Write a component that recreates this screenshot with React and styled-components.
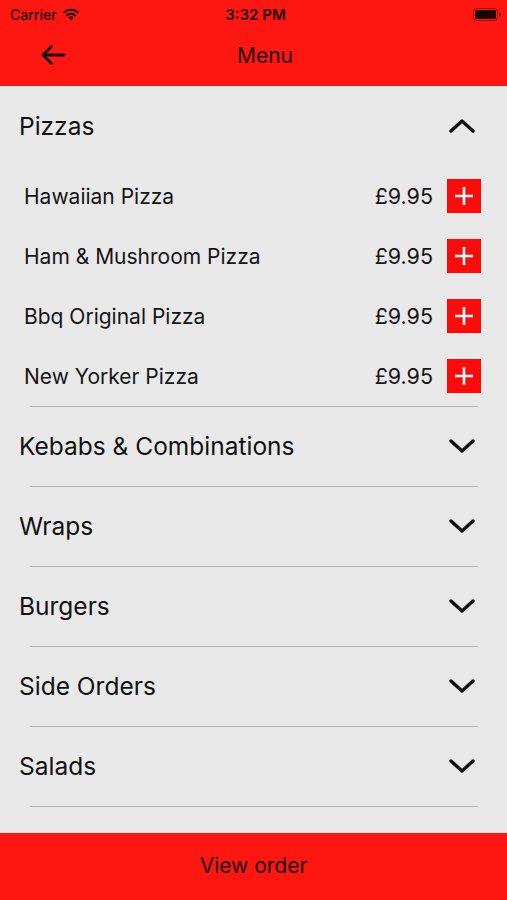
import React, { useState } from "react";
import styled, { createGlobalStyle } from "styled-components";

const GlobalStyle = createGlobalStyle`
  html, body { margin: 0; padding: 0; }
  body {
    font-family: Inter, "Liberation Sans", Arial, sans-serif;
    background: #e9e9e9;
  }
`;

const RED = "#fe1610";

const Screen = styled.div`
  width: 507px;
  height: 900px;
  display: flex;
  flex-direction: column;
  background: #e9e9e9;
  overflow: hidden;
`;

const Header = styled.header`
  background: ${RED};
  height: 86px;
  display: flex;
  flex-direction: column;
`;

const StatusBar = styled.div`
  height: 28px;
  display: grid;
  grid-template-columns: 1fr auto 1fr;
  align-items: center;
  padding: 0 6px 0 10px;
  color: #1a0505;
`;

const Carrier = styled.div`
  display: flex;
  align-items: center;
  gap: 5px;
  font-size: 14px;
  font-weight: 500;
`;

const Clock = styled.div`
  font-size: 15px;
  font-weight: 600;
`;

const Battery = styled.div`
  justify-self: end;
  display: flex;
  align-items: center;
`;

const NavBar = styled.div`
  flex: 1;
  display: flex;
  align-items: center;
  padding: 0 0 4px 40px;
  color: #1a0505;
`;

const BackButton = styled.button`
  border: 0;
  background: none;
  padding: 0;
  width: 30px;
  height: 30px;
  display: flex;
  align-items: center;
  cursor: pointer;
`;

const Title = styled.h1`
  margin: 0 0 0 167px;
  font-size: 21px;
  font-weight: 400;
`;

const Content = styled.main`
  flex: 1;
  overflow: hidden;
`;

const Section = styled.section``;

const SectionHead = styled.div`
  height: 80px;
  display: flex;
  align-items: center;
  justify-content: space-between;
  padding: 0 32px 0 19px;
  cursor: pointer;
`;

const SectionTitle = styled.span`
  font-size: 24.5px;
  color: #111;
`;

const ItemRow = styled.div`
  height: 60px;
  display: flex;
  align-items: center;
  padding: 0 26px 0 24px;
`;

const ItemName = styled.span`
  flex: 1;
  font-size: 21px;
  color: #151515;
`;

const Price = styled.span`
  font-size: 21.5px;
  color: #151515;
  margin-right: 14px;
`;

const AddButton = styled.button`
  width: 34px;
  height: 34px;
  border: 0;
  padding: 0;
  background: #fe0a0a;
  display: flex;
  align-items: center;
  justify-content: center;
`;

const Divider = styled.hr`
  margin: 0 29px -1px 30px;
  border: 0;
  border-top: 1px solid #b3b3b3;
  position: relative;
`;

const Footer = styled.button`
  height: 67px;
  border: 0;
  background: ${RED};
  font-family: inherit;
  font-size: 21px;
  color: #1a0505;
  padding: 0 0 2px;
`;

const Chevron = ({ up }) => (
  <svg width="26" height="16" viewBox="0 0 26 16">
    <path
      d={up ? "M2 13 L13 3 L24 13" : "M2 3 L13 13 L24 3"}
      fill="none"
      stroke="#111"
      strokeWidth="3.4"
      strokeLinecap="round"
      strokeLinejoin="round"
    />
  </svg>
);

const Plus = () => (
  <svg width="20" height="20" viewBox="0 0 20 20">
    <path d="M10 1 V19 M1 10 H19" stroke="#fff" strokeWidth="2.6" />
  </svg>
);

const sections = [
  {
    name: "Pizzas",
    items: [
      ["Hawaiian Pizza", "£9.95"],
      ["Ham & Mushroom Pizza", "£9.95"],
      ["Bbq Original Pizza", "£9.95"],
      ["New Yorker Pizza", "£9.95"],
    ],
  },
  { name: "Kebabs & Combinations", items: [] },
  { name: "Wraps", items: [] },
  { name: "Burgers", items: [] },
  { name: "Side Orders", items: [] },
  { name: "Salads", items: [] },
];

export default function App() {
  const [open, setOpen] = useState("Pizzas");

  return (
    <Screen>
      <GlobalStyle />
      <Header>
        <StatusBar>
          <Carrier>
            Carrier
            <svg width="18" height="13" viewBox="0 0 18 13">
              <path d="M9 12.5 L6.3 9.6 A3.8 3.8 0 0 1 11.7 9.6 Z" fill="#1a0505" />
              <path d="M4.4 7.7 A6.5 6.5 0 0 1 13.6 7.7" fill="none" stroke="#1a0505" strokeWidth="2" />
              <path d="M1.6 4.9 A10.5 10.5 0 0 1 16.4 4.9" fill="none" stroke="#1a0505" strokeWidth="2" />
            </svg>
          </Carrier>
          <Clock>3:32 PM</Clock>
          <Battery>
            <svg width="28" height="13" viewBox="0 0 28 13">
              <rect x="0.5" y="0.5" width="24" height="12" rx="3" fill="none" stroke="#1a0505" strokeOpacity="0.4" />
              <rect x="2" y="2" width="21" height="9" rx="1.8" fill="#1a0505" />
              <path d="M26 4.5 V8.5 A2 2 0 0 0 26 4.5 Z" fill="#1a0505" fillOpacity="0.4" />
            </svg>
          </Battery>
        </StatusBar>
        <NavBar>
          <BackButton aria-label="Back">
            <svg width="26" height="22" viewBox="0 0 26 22">
              <path
                d="M24 11 H3 M11.5 2.5 L3 11 L11.5 19.5"
                fill="none"
                stroke="#111"
                strokeWidth="2.8"
                strokeLinecap="round"
                strokeLinejoin="round"
              />
            </svg>
          </BackButton>
          <Title>Menu</Title>
        </NavBar>
      </Header>

      <Content>
        {sections.map((s) => {
          const isOpen = open === s.name;
          return (
            <Section key={s.name}>
              <SectionHead onClick={() => setOpen(isOpen ? null : s.name)}>
                <SectionTitle>{s.name}</SectionTitle>
                <Chevron up={isOpen} />
              </SectionHead>
              {isOpen &&
                s.items.map(([name, price]) => (
                  <ItemRow key={name}>
                    <ItemName>{name}</ItemName>
                    <Price>{price}</Price>
                    <AddButton aria-label={`Add ${name}`}>
                      <Plus />
                    </AddButton>
                  </ItemRow>
                ))}
              <Divider />
            </Section>
          );
        })}
      </Content>

      <Footer>View order</Footer>
    </Screen>
  );
}
